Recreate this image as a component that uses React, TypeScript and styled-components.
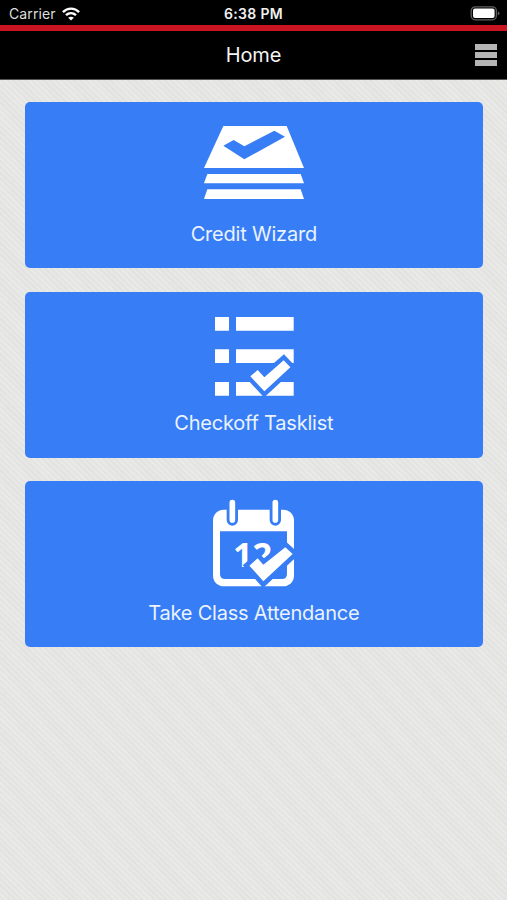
import React from 'react';
import styled, { createGlobalStyle } from 'styled-components';

const GlobalStyle = createGlobalStyle`
  body { margin: 0; background: #e6e6e4; }
  * { box-sizing: border-box; }
`;

const BLUE = '#377df6';

const Screen = styled.div`
  display: flex;
  flex-direction: column;
  width: 100%;
  height: 900px;
  overflow: hidden;
  font-family: Inter, sans-serif;
  background:
    repeating-linear-gradient(44deg, rgba(255, 255, 255, 0.12) 0 1.2px, rgba(190, 190, 186, 0.07) 2px 3px, rgba(255, 255, 255, 0.12) 4.2px),
    repeating-linear-gradient(52deg, rgba(255, 255, 255, 0.05) 0 4px, rgba(180, 180, 176, 0.03) 9px 14px, rgba(255, 255, 255, 0.05) 23px),
    #e6e6e4;
`;

const StatusBar = styled.div`
  display: grid;
  grid-template-columns: 1fr auto 1fr;
  align-items: center;
  flex: none;
  height: 25px;
  padding: 2px 7px 0;
  background: #000;
  color: #dedede;
  font-size: 14px;
`;

const Carrier = styled.div`
  display: flex;
  align-items: center;
  gap: 6px;
  padding-left: 2px;
  letter-spacing: 0.1px;
`;

const Clock = styled.div`
  color: #f0f0f0;
  font-size: 14px;
  font-weight: 600;
  letter-spacing: 0.3px;
`;

const BatterySlot = styled.div`
  display: flex;
  justify-content: flex-end;
`;

const NavBar = styled.header`
  display: grid;
  grid-template-columns: 1fr auto 1fr;
  align-items: center;
  flex: none;
  height: 54.5px;
  padding-top: 1px;
  border-top: 6px solid #c91522;
  border-bottom: 1px solid #555;
  background: #000;
`;

const Title = styled.h1`
  grid-column: 2;
  margin: 0;
  color: #f4f4f4;
  font-size: 20px;
  font-weight: 400;
  line-height: 24px;
  letter-spacing: -0.1px;
`;

const MenuButton = styled.button`
  display: flex;
  flex-direction: column;
  justify-self: end;
  gap: 2px;
  padding: 0 10px 0 0;
  border: 0;
  background: none;
`;

const MenuLine = styled.span`
  width: 22px;
  height: 6px;
  background: #b5b5b5;
`;

const Menu = styled.main`
  display: flex;
  flex-direction: column;
  gap: 23.2px;
  padding: 22.7px 24.5px 0 25.2px;
`;

const Tile = styled.button<{ $top: number }>`
  display: grid;
  grid-template-rows: 1fr 24px;
  justify-items: center;
  width: 100%;
  height: 166.2px;
  padding: ${({ $top }) => $top}px 0 22.3px;
  border: 0;
  border-radius: 5px;
  background: ${BLUE};
  font-family: inherit;
`;

const TileIcon = styled.svg`
  display: block;
  overflow: visible;
`;

const Label = styled.span`
  color: #eaf3ff;
  font-size: 20px;
  line-height: 24px;
  letter-spacing: -0.21px;
`;

const StackIcon = () => (
  <TileIcon width="100" height="73" viewBox="0 0 300 219" fill="#fff">
    <path d="M58 0H248L300 126H0Z" />
    <path d="M10 144H290L300 172H0Z" />
    <path d="M10 190H290L300 219H0Z" />
    <path d="M58 59L89 42L121 61L211 14L243 32L121 100Z" fill={BLUE} />
  </TileIcon>
);

const ListIcon = () => (
  <TileIcon width="78.7" height="78.7" viewBox="0 0 236 236" fill="#fff">
    <path d="M0 0H42V41H0ZM63 0H236V41H63ZM0 97H42V138H0ZM63 97H236V138H63ZM0 195H42V236H0ZM63 195H236V236H63Z" />
    <path
      d="M106 178L128 159L148 181L206 130L226 151L148 223Z"
      stroke={BLUE}
      strokeWidth="26"
      paintOrder="stroke"
    />
  </TileIcon>
);

const CalendarIcon = () => (
  <TileIcon width="81" height="86.3" viewBox="0 0 243 259" fill="#fff">
    <rect y="29" width="243" height="230" rx="32" />
    <path d="M21 94H222V222Q222 237 207 237H36Q21 237 21 222Z" fill={BLUE} />
    <path d="M58 8V60M187 8V60" stroke={BLUE} strokeWidth="34" strokeLinecap="round" />
    <path d="M58 8V60M187 8V60" stroke="#fff" strokeWidth="17" strokeLinecap="round" />
    <text x="60" y="200" fontFamily="Open Sans, sans-serif" fontSize="103" fontWeight="700">12</text>
    <path
      d="M109 197L134 175L151 194L217 142L239 162L151 244Z"
      stroke={BLUE}
      strokeWidth="28"
      paintOrder="stroke"
    />
  </TileIcon>
);

const WifiIcon = () => (
  <svg width="18" height="14" viewBox="0 0 18 14" fill="none" stroke="#fff" strokeWidth="2.4">
    <path d="M.9 5.1C5.5.5 12.5.5 17.1 5.1" />
    <path d="M4 8.2C6.9 5.5 11.1 5.5 14 8.2" />
    <path d="M9 13.5L6.2 10.7C7.8 9.3 10.2 9.3 11.8 10.7Z" fill="#fff" stroke="none" />
  </svg>
);

const BatteryIcon = () => (
  <svg width="31" height="15" viewBox="0 0 31 15">
    <rect x="2.2" y=".8" width="25.2" height="13" rx="4" fill="none" stroke="#606060" strokeWidth="1.3" />
    <rect x="4" y="2.6" width="21.6" height="9.4" rx="2" fill="#fff" />
    <path d="M28.8 5.2Q30.5 6 30.5 7.3T28.8 9.4Z" fill="#606060" />
  </svg>
);

const tiles = [
  { label: 'Credit Wizard', Icon: StackIcon, top: 23.8 },
  { label: 'Checkoff Tasklist', Icon: ListIcon, top: 25.2 },
  { label: 'Take Class Attendance', Icon: CalendarIcon, top: 18.8 },
];

export default function App() {
  return (
    <Screen>
      <GlobalStyle />
      <StatusBar>
        <Carrier>Carrier<WifiIcon /></Carrier>
        <Clock>6:38 PM</Clock>
        <BatterySlot><BatteryIcon /></BatterySlot>
      </StatusBar>
      <NavBar>
        <Title>Home</Title>
        <MenuButton aria-label="Menu">
          <MenuLine />
          <MenuLine />
          <MenuLine />
        </MenuButton>
      </NavBar>
      <Menu>
        {tiles.map(({ label, Icon, top }) => (
          <Tile key={label} $top={top}>
            <Icon />
            <Label>{label}</Label>
          </Tile>
        ))}
      </Menu>
    </Screen>
  );
}
